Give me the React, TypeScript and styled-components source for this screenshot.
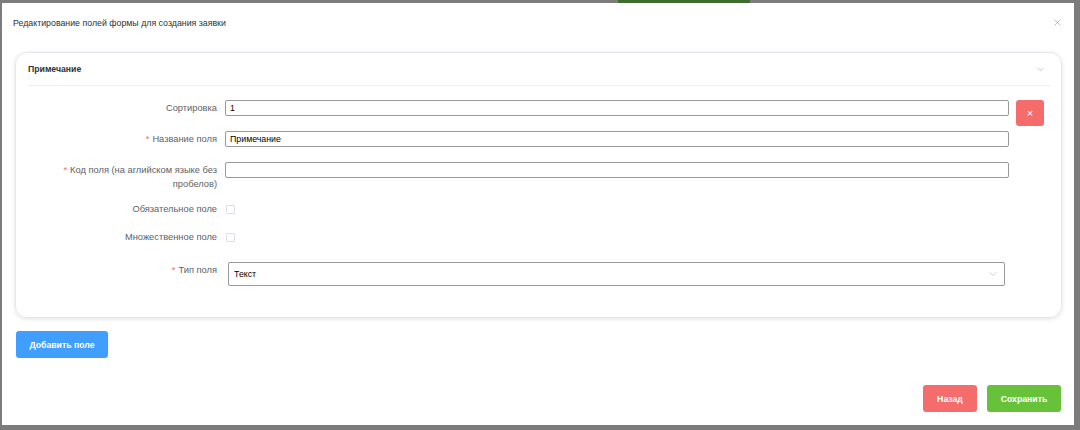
import styled, { createGlobalStyle } from "styled-components";
import { ChevronDown, X } from "lucide-react";

const GlobalStyle = createGlobalStyle`
    html, body {
        margin: 0;
        padding: 0;
        width: 1080px;
        height: 430px;
        overflow: hidden;
        background-color: #7c7c7c;
        background-image: linear-gradient(to right, transparent 618px, #3f6d2e 618px, #3f6d2e 750px, transparent 750px);
        background-size: 100% 3px;
        background-repeat: no-repeat;
        font-family: "Liberation Sans", Arial, sans-serif;
    }
    * {
        box-sizing: border-box;
    }
`;

const Backdrop = styled.div`
    width: 1080px;
    height: 430px;
    padding: 3px 6px 5px 2px;
`;

const Modal = styled.div`
    width: 1072px;
    height: 422px;
    background: #fff;
    display: flex;
    flex-direction: column;
    padding: 0 13px 13px 13px;
`;

const ModalHeader = styled.div`
    height: 38px;
    display: flex;
    align-items: center;
    justify-content: space-between;
    margin-left: -2px;
    margin-right: -1px;
    padding-top: 1px;
`;

const Title = styled.span`
    font-size: 8.8px;
    color: #303133;
`;

const CloseIcon = styled(X)`
    color: #9a9a9a;
    margin-right: -1px;
`;

const Body = styled.div`
    flex: 1;
    padding-top: 11px;
`;

const Card = styled.div`
    width: 1047px;
    border: 1px solid #e4e7ed;
    border-radius: 12px;
    box-shadow: 0 1px 4px rgba(0, 0, 0, 0.12);
    padding: 0 0 31px 0;
`;

const CardHeader = styled.div`
    height: 33px;
    margin: 0 11px 0 12px;
    border-bottom: 1px solid #ebeef5;
    display: flex;
    align-items: center;
    justify-content: space-between;
`;

const CardTitle = styled.span`
    font-size: 8.7px;
    font-weight: bold;
    color: #303133;
`;

const Chevron = styled(ChevronDown)`
    color: #a8abb2;
    margin-right: 4px;
`;

const Form = styled.div`
    padding: 14px 17px 0 12px;
    display: flex;
    gap: 7px;
`;

const Fields = styled.div`
    flex: 1;
    display: flex;
    flex-direction: column;
`;

const Row = styled.div<{ $gap: number }>`
    display: flex;
    align-items: flex-start;
    margin-bottom: ${p => p.$gap}px;
`;

const Label = styled.div`
    width: 197px;
    flex-shrink: 0;
    text-align: right;
    padding: 1px 8px 0 30px;
    font-size: 9.3px;
    line-height: 14px;
    color: #606266;
`;

const Star = styled.span`
    color: #f56c6c;
    margin-right: 3px;
`;

const Input = styled.input`
    flex: 1;
    height: 16px;
    border: 1px solid #9a9a9a;
    border-radius: 2px;
    padding: 0 4px;
    font-family: "Liberation Sans", Arial, sans-serif;
    font-size: 8.8px;
    color: #000;
    outline: none;
`;

const CheckCell = styled.div`
    height: 16px;
    display: flex;
    align-items: center;
    padding-left: 1px;
`;

const Check = styled.span`
    width: 9px;
    height: 9px;
    border: 1px solid #dcdfe6;
    border-radius: 1px;
    background: #fff;
`;

const Select = styled.div`
    flex: 1;
    height: 24px;
    margin: 0 4px 0 3px;
    border: 1px solid #9a9a9a;
    border-radius: 2px;
    display: flex;
    align-items: center;
    justify-content: space-between;
    padding: 0 5px 0 5px;
    font-size: 8.8px;
    color: #000;
`;

const SelectChevron = styled(ChevronDown)`
    color: #b8bbc2;
`;

const Button = styled.button<{ $color: string; $w: number }>`
    width: ${p => p.$w}px;
    height: 27px;
    border: none;
    border-radius: 3px;
    background: ${p => p.$color};
    color: #fff;
    font-family: "Liberation Sans", Arial, sans-serif;
    font-size: 8.7px;
    font-weight: bold;
    display: flex;
    align-items: center;
    justify-content: center;
    padding: 0;
`;

const RemoveButton = styled(Button)`
    height: 26px;
    font-weight: normal;
    font-size: 11px;
`;

const AddRow = styled.div`
    margin-top: 13px;
    padding-left: 1px;
`;

const Footer = styled.div`
    display: flex;
    justify-content: flex-end;
    gap: 10px;
`;

export default function App() {
    return (
        <>
            <GlobalStyle />
            <Backdrop>
                <Modal>
                    <ModalHeader>
                        <Title>Редактирование полей формы для создания заявки</Title>
                        <CloseIcon size={11} strokeWidth={1.4} />
                    </ModalHeader>
                    <Body>
                        <Card>
                            <CardHeader>
                                <CardTitle>Примечание</CardTitle>
                                <Chevron size={11} strokeWidth={1.4} />
                            </CardHeader>
                            <Form>
                                <Fields>
                                    <Row $gap={15}>
                                        <Label>Сортировка</Label>
                                        <Input defaultValue="1" />
                                    </Row>
                                    <Row $gap={15}>
                                        <Label><Star>*</Star>Название поля</Label>
                                        <Input defaultValue="Примечание" />
                                    </Row>
                                    <Row $gap={10}>
                                        <Label><Star>*</Star>Код поля (на аглийском языке без пробелов)</Label>
                                        <Input defaultValue="" />
                                    </Row>
                                    <Row $gap={12}>
                                        <Label>Обязательное поле</Label>
                                        <CheckCell><Check /></CheckCell>
                                    </Row>
                                    <Row $gap={17}>
                                        <Label>Множественное поле</Label>
                                        <CheckCell><Check /></CheckCell>
                                    </Row>
                                    <Row $gap={0}>
                                        <Label><Star>*</Star>Тип поля</Label>
                                        <Select>
                                            <span>Текст</span>
                                            <SelectChevron size={12} strokeWidth={1.4} />
                                        </Select>
                                    </Row>
                                </Fields>
                                <RemoveButton $color="#f56c6c" $w={28}>×</RemoveButton>
                            </Form>
                        </Card>
                        <AddRow>
                            <Button $color="#409eff" $w={92}>Добавить поле</Button>
                        </AddRow>
                    </Body>
                    <Footer>
                        <Button $color="#f56c6c" $w={54}>Назад</Button>
                        <Button $color="#67c23a" $w={74}>Сохранить</Button>
                    </Footer>
                </Modal>
            </Backdrop>
        </>
    );
}
